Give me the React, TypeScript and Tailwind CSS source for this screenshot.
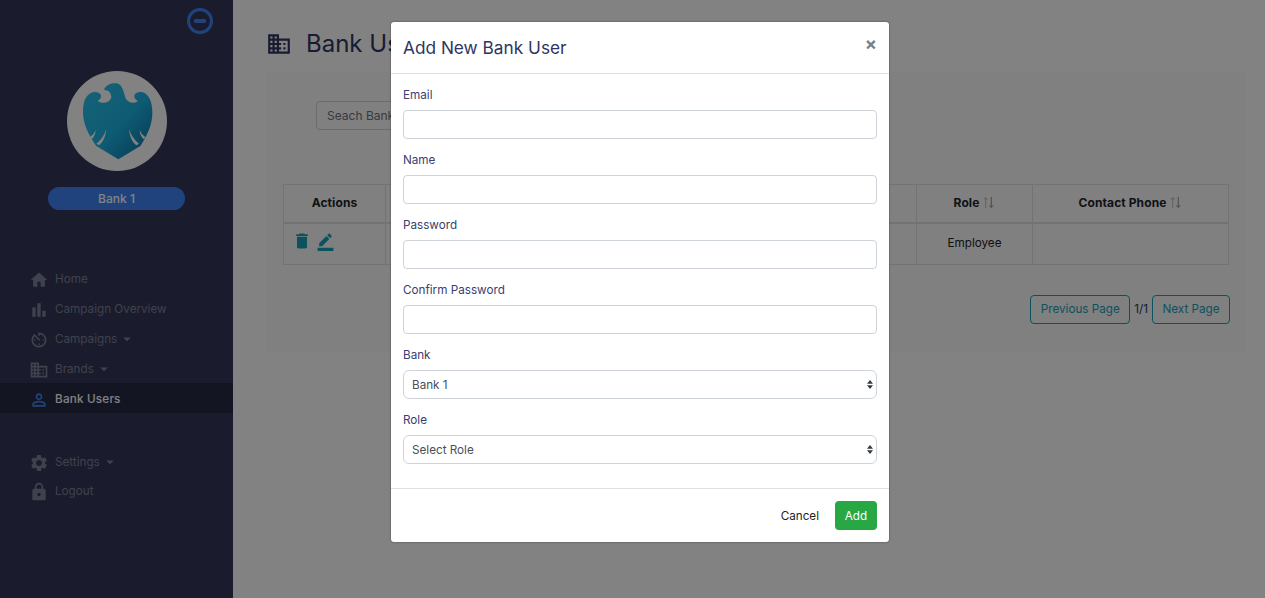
import { MdHome, MdBarChart, MdAvTimer, MdDomain, MdPermIdentity, MdSettings, MdLock, MdDelete, MdBorderColor, MdArrowDropDown } from 'react-icons/md'
import type { ReactNode } from 'react'

const Logo = () => (
  <svg viewBox="-30 -15 300 300" className="w-[100px] h-[100px] rounded-full bg-white">
    <defs>
      <linearGradient id="eagle" x1="0" y1="0" x2="1" y2="1">
        <stop offset="0" stopColor="#2cc4ea" />
        <stop offset="0.55" stopColor="#1cb2e2" />
        <stop offset="1" stopColor="#0e6c9c" />
      </linearGradient>
    </defs>
    <path
      fill="url(#eagle)"
      d="M82 38 C88 26 105 20 120 22 C135 26 140 45 145 65 C150 75 158 80 168 80 C175 80 180 78 182 74 C175 72 171 65 172 57 C178 47 195 45 207 54 C220 65 226 85 226 110 C226 140 216 170 190 210 L124 250 L58 210 C30 170 18 140 18 108 C18 85 22 65 37 54 C50 45 66 47 72 57 C73 65 69 72 62 74 C66 78 72 80 80 80 C90 80 98 75 103 65 C103 52 96 42 82 42 Z"
    />
    <path fill="#fff" d="M156 160 C158 182 166 198 178 208 L186 203 C172 192 162 178 156 160Z" />
    <path fill="#fff" d="M188 162 C188 172 192 182 200 190 L206 184 C198 178 192 172 188 162Z" />
    <path fill="#fff" d="M88 160 C86 182 78 198 66 208 L58 203 C72 192 82 178 88 160Z" />
    <path fill="#fff" d="M56 162 C56 172 52 182 44 190 L38 184 C46 178 52 172 56 162Z" />
  </svg>
)

const NavItem = ({ icon, label, caret, active, short }: { icon: ReactNode; label: string; caret?: boolean; active?: boolean; short?: boolean }) => (
  <div className={`flex items-center ${short ? 'h-[28px]' : 'h-[30px]'} pl-[29px] text-[11.7px] ${active ? 'bg-[#272a45] text-white font-medium tracking-[0.2px]' : 'text-[#7d8096]'}`}>
    <span className={`w-[26px] flex items-center pt-[3px] ${active ? 'text-[#4084f8]' : ''}`}>{icon}</span>
    <span className="pt-[3px]">{label}</span>
    {caret && <MdArrowDropDown size={18} className="ml-[1px] mt-[2px]" />}
  </div>
)

const Sidebar = () => (
  <div className="w-[233px] h-[598px] shrink-0 bg-[#34385a] flex flex-col">
    <div className="flex justify-end pr-[20px] pt-[8px]">
      <svg viewBox="0 0 26 26" className="w-[26px] h-[26px]">
        <circle cx="13" cy="13" r="11.5" fill="none" stroke="#4084f8" strokeWidth="3" />
        <rect x="7" y="11" width="12" height="4" rx="1.5" fill="#4084f8" />
      </svg>
    </div>
    <div className="flex justify-center pt-[37px]">
      <Logo />
    </div>
    <div className="mx-[48px] mt-[16px] w-[137px] h-[23px] rounded-full bg-[#4084f8] text-white text-xs font-medium flex items-center justify-center">
      Bank 1
    </div>
    <div className="mt-[53px]">
      <NavItem icon={<MdHome size={20} />} label="Home" />
      <NavItem icon={<MdBarChart size={20} />} label="Campaign Overview" />
      <NavItem icon={<MdAvTimer size={20} />} label="Campaigns" caret />
      <NavItem icon={<MdDomain size={20} />} label="Brands" caret />
      <NavItem icon={<MdPermIdentity size={20} />} label="Bank Users" active />
    </div>
    <div className="mt-[33px]">
      <NavItem icon={<MdSettings size={20} />} label="Settings" caret />
      <NavItem icon={<MdLock size={20} />} label="Logout" short />
    </div>
  </div>
)

const SortArrows = () => (
  <svg viewBox="0 0 14 14" className="w-[13px] h-[13px] inline-block ml-[3px] align-[-2px]" fill="none">
    <path d="M4 13V2M2 4l2-2.5L6 4" stroke="#bbb" strokeWidth="1" />
    <path d="M10 1v11M8 10l2 2.5 2-2.5" stroke="#888" strokeWidth="1" />
  </svg>
)

const Main = () => (
  <div className="flex-1 bg-white pl-[34px] pr-[19px]">
    <div className="flex items-center h-[72px] pt-[16px] text-[#2f3561]">
      <MdDomain size={26} className="-ml-[1px]" />
      <h1 className="ml-[14px] text-2xl font-normal">Bank Users</h1>
    </div>
    <div className="h-[280px] bg-[#fbfbfb] pl-[16px] pr-[17px]">
      <div className="pt-[29px] pl-[33px]">
        <input
          placeholder="Seach Bank Users"
          className="w-[200px] h-[29px] px-[10px] border border-[#ced4da] rounded text-xs placeholder:text-[#6c757d]"
        />
      </div>
      <table className="mt-[54px] w-[946px] table-fixed border-collapse text-[11.7px] text-[#212529]">
        <thead>
          <tr className="h-[38px] border-b-2 border-[#dee2e6]">
            <th className="w-[102px] border border-[#dee2e6] font-bold text-xs tracking-[0.1px]">Actions</th>
            <th className="w-[531px] border border-[#dee2e6]"></th>
            <th className="w-[116px] border border-[#dee2e6] font-bold text-xs tracking-[0.1px]">Role<SortArrows /></th>
            <th className="border border-[#dee2e6] font-bold text-xs tracking-[0.1px]">Contact Phone<SortArrows /></th>
          </tr>
        </thead>
        <tbody>
          <tr className="h-[42px]">
            <td className="border border-[#dee2e6] pl-[8px]">
              <div className="flex items-center text-[#17a2b8] -mt-[5px]">
                <MdDelete size={20} />
                <MdBorderColor size={19} className="ml-[4px]" />
              </div>
            </td>
            <td className="border border-[#dee2e6]"></td>
            <td className="border border-[#dee2e6] text-center">Employee</td>
            <td className="border border-[#dee2e6]"></td>
          </tr>
        </tbody>
      </table>
      <div className="mt-[30px] flex justify-end items-center text-[11.7px] -mr-[1px]">
        <button className="h-[29px] w-[100px] border border-[#17a2b8] rounded text-[#17a2b8]">Previous Page</button>
        <span className="mx-[4px] text-[#2f3561]">1/1</span>
        <button className="h-[29px] w-[78px] border border-[#17a2b8] rounded text-[#17a2b8]">Next Page</button>
      </div>
    </div>
  </div>
)

const Field = ({ label }: { label: string }) => (
  <div className="h-[65px]">
    <label className="block h-[24px] text-[11.7px] leading-[18px] text-[#3a4070]">{label}</label>
    <input className="block w-full h-[29px] border border-[#ced4da] rounded bg-white" />
  </div>
)

const SelectField = ({ label, value }: { label: string; value: string }) => (
  <div className="h-[65px]">
    <label className="block h-[24px] text-[11.7px] leading-[18px] text-[#3a4070]">{label}</label>
    <div className="relative">
      <select
        defaultValue={value}
        className="block w-full h-[29px] pl-[8px] pt-[2px] border border-[#ced4da] rounded-md bg-white text-[11.7px] text-[#495057] appearance-none"
      >
        <option>{value}</option>
      </select>
      <svg viewBox="0 0 8 12" className="absolute right-[4px] top-[9px] w-[6px] h-[11px] pointer-events-none">
        <path d="M4 0L8 5H0Z M0 7H8L4 12Z" fill="#343a40" />
      </svg>
    </div>
  </div>
)

const Modal = () => (
  <div className="absolute inset-0 bg-black/[0.49] flex justify-center items-start pt-[22px]">
    <div className="w-[498px] h-[520px] ml-[15px] bg-white rounded-[3px] shadow-[0_0_2px_rgba(0,0,0,0.5)] flex flex-col">
      <div className="h-[52px] shrink-0 border-b border-[#dee2e6] px-[12px] flex items-start justify-between">
        <h2 className="text-[17.25px] font-normal text-[#2f3561] mt-[13px]">Add New Bank User</h2>
        <span className="text-[18px] leading-none font-bold text-[#7f7f7f] mt-[13px]">×</span>
      </div>
      <div className="flex-1 pt-[12px] px-[12px]">
        <Field label="Email" />
        <Field label="Name" />
        <Field label="Password" />
        <Field label="Confirm Password" />
        <SelectField label="Bank" value="Bank 1" />
        <SelectField label="Role" value="Select Role" />
      </div>
      <div className="h-[54px] shrink-0 border-t border-[#dee2e6] px-[12px] pt-[12px] flex items-start justify-end">
        <button className="h-[29px] pt-[2px] text-[11.7px] text-[#212529] mr-[16px]">Cancel</button>
        <button className="w-[42px] h-[29px] pt-[2px] rounded bg-[#28a745] text-white text-[11.7px]">Add</button>
      </div>
    </div>
  </div>
)

export default function App() {
  return (
    <div className="relative h-[598px] flex overflow-hidden font-['Inter',sans-serif]">
      <Sidebar />
      <Main />
      <Modal />
    </div>
  )
}
